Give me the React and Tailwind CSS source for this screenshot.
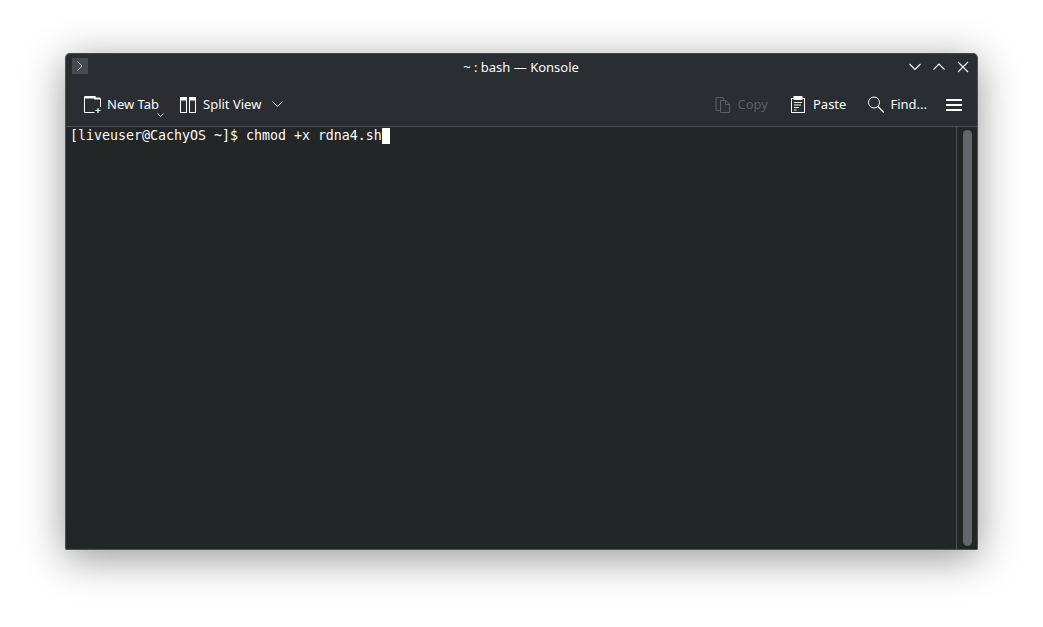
import React from 'react'

function ToolButton({ icon, label, disabled, className = '' }) {
  return (
    <div className={`flex items-center ${disabled ? 'text-[#5c5f63]' : 'text-[#fcfcfc]'} ${className}`}>
      {icon}
      <span>{label}</span>
    </div>
  )
}

const NewTabIcon = (
  <svg width="18" height="18" viewBox="0 0 18 18" fill="none" stroke="#fcfcfc" strokeWidth="1">
    <path d="M10.5 16.5H0.5V0.5H11L12 2.5H16.5V11" />
    <path d="M1 1.5H11V2.5H16" strokeWidth="2" />
    <path d="M14 12V17M11.5 14.5H16.5" strokeWidth="1.2" />
  </svg>
)

const SplitIcon = (
  <svg width="16" height="16" viewBox="0 0 16 16" fill="none" stroke="#fcfcfc" strokeWidth="1">
    <rect x="0.5" y="0.5" width="6" height="15" />
    <rect x="9.5" y="0.5" width="6" height="15" />
    <path d="M0.5 2H6.5M9.5 2H15.5" strokeWidth="3" />
  </svg>
)

const CopyIcon = (
  <svg width="16" height="18" viewBox="0 0 16 18" fill="none" stroke="#5c5f63" strokeWidth="1">
    <path d="M5.5 14.5H1V1.5H8L9 4" />
    <path d="M5.5 4.5H11L14.5 8V16.5H5.5Z" />
    <path d="M10.5 4.5V8.5H14.5" />
  </svg>
)

const PasteIcon = (
  <svg width="16" height="18" viewBox="0 0 16 18" fill="none" stroke="#fcfcfc" strokeWidth="1">
    <rect x="1.5" y="2.5" width="13" height="14" />
    <rect x="4" y="0.5" width="8" height="3" fill="#fcfcfc" />
    <path d="M4 6.5H12M4 9H11M4 11.5H9M4 14H6.5" />
  </svg>
)

const FindIcon = (
  <svg width="17" height="17" viewBox="0 0 17 17" fill="none" stroke="#fcfcfc" strokeWidth="1">
    <circle cx="7" cy="6.5" r="5.5" />
    <path d="M11 10.5L17 16.5" strokeWidth="1.2" />
  </svg>
)

export default function App() {
  return (
    <div className="w-[1043px] h-[627px] bg-white overflow-hidden pt-[53px] pl-[65px] font-['Noto_Sans',sans-serif]">
      <div className="w-[913px] h-[497px] flex flex-col rounded-t-[5px] rounded-b-[2px] border border-[#4d5156] border-t-[#44474c] bg-[#2a2e32] shadow-[0_8px_42px_rgba(0,0,0,0.42)] overflow-hidden">
        {/* Title bar */}
        <div className="h-[32px] shrink-0 flex items-center pl-[6px] pr-[8px] pb-[6px] relative">
          <div className="self-start mt-[4px] w-[16px] h-[16px] bg-[#474b50] flex items-center justify-center">
            <svg width="8" height="10" viewBox="0 0 8 10" fill="none" stroke="#b8babc" strokeWidth="1">
              <path d="M1.5 0.5L6 5L1.5 9.5" />
            </svg>
          </div>
          <div className="absolute inset-x-0 top-[4px] pr-[1px] text-center text-[13px] leading-[18px] text-[#fcfcfc]">~ : bash — Konsole</div>
          <div className="ml-auto flex items-center gap-[12px]">
            <svg width="12" height="12" viewBox="0 0 12 12" fill="none" stroke="#fcfcfc" strokeWidth="1.1"><path d="M0.5 3L6 8.5L11.5 3" /></svg>
            <svg width="12" height="12" viewBox="0 0 12 12" fill="none" stroke="#fcfcfc" strokeWidth="1.1"><path d="M0.5 8.5L6 3L11.5 8.5" /></svg>
            <svg width="12" height="12" viewBox="0 0 12 12" fill="none" stroke="#fcfcfc" strokeWidth="1.1"><path d="M1 1L11 11M11 1L1 11" /></svg>
          </div>
        </div>

        {/* Toolbar */}
        <div className="h-[41px] shrink-0 flex items-center pl-[18px] pr-[15px] pb-[3px] text-[13px] border-b border-[#4d5156]">
          <div className="relative">
            <ToolButton icon={NewTabIcon} label="New Tab" className="gap-[5px]" />
            <svg className="absolute left-[73px] top-[18px]" width="7" height="5" viewBox="0 0 7 5" fill="none" stroke="#fcfcfc" strokeWidth="1"><path d="M0.5 0.5L3.5 3.5L6.5 0.5" /></svg>
          </div>
          <ToolButton icon={SplitIcon} label="Split View" className="ml-[21px] gap-[7px]" />
          <svg className="ml-[11px]" width="11" height="7" viewBox="0 0 11 7" fill="none" stroke="#fcfcfc" strokeWidth="1"><path d="M0.5 0.5L5.5 5.5L10.5 0.5" /></svg>
          <div className="ml-auto flex items-center">
            <ToolButton icon={CopyIcon} label="Copy" disabled className="gap-[7px]" />
            <ToolButton icon={PasteIcon} label="Paste" className="ml-[22px] gap-[7px]" />
            <ToolButton icon={FindIcon} label="Find..." className="ml-[21px] gap-[6px]" />
            <div className="ml-[19px] w-[16px] flex flex-col gap-[3px]">
              <div className="h-[2px] bg-[#fcfcfc]" />
              <div className="h-[2px] bg-[#fcfcfc]" />
              <div className="h-[2px] bg-[#fcfcfc]" />
            </div>
          </div>
        </div>

        {/* Terminal */}
        <div className="flex-1 flex bg-[#232627] min-h-0">
          <div className="flex-1 pl-[4px] pt-[1px] font-['DejaVu_Sans_Mono',monospace] text-[13.29px] leading-[16px] text-[#fcfcfc] whitespace-pre flex items-start">
            <span className="flex items-center">[liveuser@CachyOS ~]$ chmod +x rdna4.sh<span className="inline-block w-[8px] h-[16px] bg-white" /></span>
          </div>
          <div className="w-[21px] shrink-0 border-l border-[#4d5156] pl-[6px] pr-[5px] pt-[3px] pb-[3px]">
            <div className="h-full w-[9px] rounded-full bg-[#63666a]" />
          </div>
        </div>
      </div>
    </div>
  )
}
